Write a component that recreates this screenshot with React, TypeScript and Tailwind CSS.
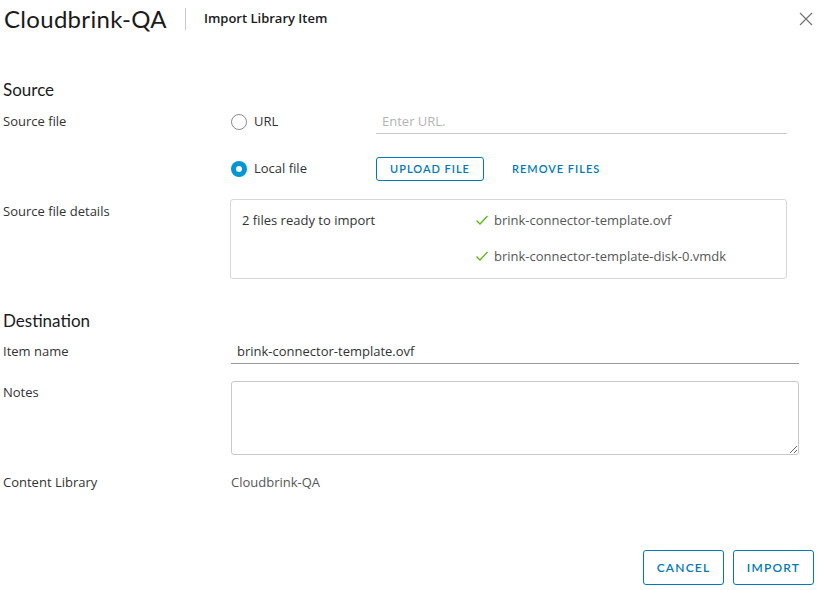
import React from 'react';

const font = { fontFamily: '"Open Sans", Lato, "Liberation Sans", sans-serif' };
const lato = { fontFamily: 'Lato, "Open Sans", "Liberation Sans", sans-serif' };

function Check() {
  return (
    <svg width="14" height="14" viewBox="0 0 14 14" className="shrink-0">
      <path d="M1.5 7.5 L5 11 L12.5 3" fill="none" stroke="#5eb715" strokeWidth="1.3" />
    </svg>
  );
}

function Radio({ checked, label }: { checked?: boolean; label: string }) {
  return (
    <div className="flex items-center gap-[7px]">
      {checked ? (
        <span className="w-[16px] h-[16px] rounded-full bg-[#0095d3] flex items-center justify-center">
          <span className="w-[6px] h-[6px] rounded-full bg-white" />
        </span>
      ) : (
        <span className="w-[16px] h-[16px] rounded-full border border-[#8c8c8c] bg-white" />
      )}
      <span className="text-[13px] text-[#333]">{label}</span>
    </div>
  );
}

export default function App() {
  return (
    <div className="w-[819px] h-[590px] bg-white text-[#333] relative" style={font}>
      {/* Header */}
      <div className="flex items-center h-[38px] pl-[4px]">
        <span className="text-[24px] leading-none text-[#1b1b1b] tracking-[0.3px]" style={lato}>Cloudbrink-QA</span>
        <span className="ml-[18px] w-px h-[22px] bg-[#c8c8c8]" />
        <span className="ml-[18px] text-[13px] font-semibold text-[#1b1b1b]">Import Library Item</span>
        <button className="ml-auto mr-[6px] w-[14px] h-[14px]">
          <svg width="14" height="14" viewBox="0 0 14 14">
            <path d="M1 1 L13 13 M13 1 L1 13" stroke="#737373" strokeWidth="1.2" />
          </svg>
        </button>
      </div>

      <div className="pl-[3px]">
        {/* Source */}
        <div className="mt-[42px] text-[17px] leading-[20px] text-[#1b1b1b]" style={lato}>Source</div>

        <div className="flex items-center h-[24px] mt-[10px]">
          <div className="w-[228px] text-[13px]">Source file</div>
          <div className="w-[145px]">
            <Radio label="URL" />
          </div>
          <div className="w-[411px] h-[24px] border-b border-[#c8c8c8] flex items-center pl-[6px]">
            <span className="text-[13px] text-[#b3b3b3]">Enter URL.</span>
          </div>
        </div>

        <div className="flex items-center h-[24px] mt-[23px]" style={lato}>
          <div className="w-[228px]" />
          <div className="w-[145px]" style={font}>
            <Radio checked label="Local file" />
          </div>
          <button className="h-[24px] w-[108px] border border-[#0079b8] rounded-[3px] text-[11px] font-semibold tracking-[1px] text-[#0079b8]">
            UPLOAD FILE
          </button>
          <button className="ml-[28px] text-[11px] font-semibold tracking-[1px] text-[#0079b8]">REMOVE FILES</button>
        </div>

        <div className="flex mt-[18px]">
          <div className="w-[227px] text-[13px] pt-[3px]">Source file details</div>
          <div className="w-[557px] h-[80px] border border-[#d7d7d7] rounded-[3px] flex pl-[11px] pt-[12px]">
            <div className="w-[233px] text-[13px] leading-[16px]">2 files ready to import</div>
            <div className="flex flex-col gap-[20px]">
              <div className="flex items-center gap-[5px] text-[13px] leading-[16px] text-[#565656]">
                <Check />
                brink-connector-template.ovf
              </div>
              <div className="flex items-center gap-[5px] text-[13px] leading-[16px] text-[#565656]">
                <Check />
                brink-connector-template-disk-0.vmdk
              </div>
            </div>
          </div>
        </div>

        {/* Destination */}
        <div className="mt-[32px] text-[17px] leading-[20px] text-[#1b1b1b]" style={lato}>Destination</div>

        <div className="flex items-center mt-[9px] h-[24px]">
          <div className="w-[228px] text-[13px]">Item name</div>
          <div className="w-[568px] h-[24px] border-b border-[#9a9a9a] flex items-center pl-[6px] text-[13px] text-[#333]">
            brink-connector-template.ovf
          </div>
        </div>

        <div className="flex mt-[17px]">
          <div className="w-[228px] text-[13px] pt-[2px]">Notes</div>
          <textarea className="w-[568px] h-[74px] border border-[#c8c8c8] rounded-[3px] outline-none" />
        </div>

        <div className="flex items-center mt-[18px]">
          <div className="w-[228px] text-[13px]">Content Library</div>
          <div className="text-[13px] text-[#565656]">Cloudbrink-QA</div>
        </div>
      </div>

      {/* Footer */}
      <div className="absolute right-[5px] bottom-[5px] flex gap-[9px]" style={lato}>
        <button className="h-[35px] w-[81px] border border-[#0079b8] rounded-[3px] text-[12px] font-semibold tracking-[1.2px] text-[#0079b8]">
          CANCEL
        </button>
        <button className="h-[35px] w-[81px] border border-[#0079b8] rounded-[3px] text-[12px] font-semibold tracking-[1.2px] text-[#0079b8]">
          IMPORT
        </button>
      </div>
    </div>
  );
}
